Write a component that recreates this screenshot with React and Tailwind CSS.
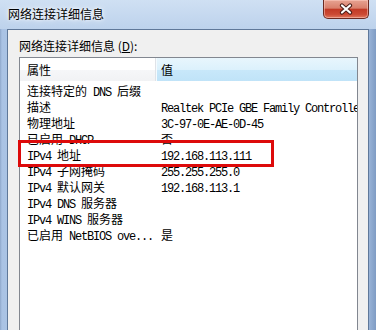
import React from 'react'

const rows = [
  ['连接特定的 DNS 后缀', ''],
  ['描述', 'Realtek PCIe GBE Family Controller'],
  ['物理地址', '3C-97-0E-AE-0D-45'],
  ['已启用 DHCP', '否'],
  ['IPv4 地址', '192.168.113.111'],
  ['IPv4 子网掩码', '255.255.255.0'],
  ['IPv4 默认网关', '192.168.113.1'],
  ['IPv4 DNS 服务器', ''],
  ['IPv4 WINS 服务器', ''],
  ['已启用 NetBIOS ove...', '是'],
]

// ASCII in the list uses a 6px-wide mono face, CJK stays at 12px
function MixedText({ text }) {
  const parts = text.split(/([\x20-\x7e]+)/).filter(Boolean)
  return parts.map((p, i) =>
    /^[\x20-\x7e]+$/.test(p) ? (
      <span key={i} className="font-['Liberation_Mono',monospace] text-[12px] tracking-[-1.2px] whitespace-pre">
        {p}
      </span>
    ) : (
      <span key={i}>{p}</span>
    )
  )
}

function CloseButton() {
  return (
    <div className="ml-auto mr-[7px] w-[46px] h-[19px] rounded-b-[5px] border border-t-0 border-[#6b2a22] bg-[linear-gradient(to_bottom,#e7a392_0%,#d97f6c_45%,#c23a26_52%,#cc4a34_80%,#e0785e_100%)] flex items-center justify-center shadow-[inset_0_0_0_1px_rgba(255,210,200,0.5)]">
      <svg width="14" height="12" viewBox="0 0 14 12">
        <path d="M3 2.5 L11 9.5 M11 2.5 L3 9.5" stroke="#4a1d18" strokeWidth="4.2" strokeLinecap="round" />
        <path d="M3 2.5 L11 9.5 M11 2.5 L3 9.5" stroke="#ffffff" strokeWidth="2.2" strokeLinecap="round" />
      </svg>
    </div>
  )
}

export default function App() {
  return (
    <div className="w-[376px] h-[330px] overflow-hidden flex flex-col bg-[linear-gradient(to_right,#8fa8cb_0px,#aac3e4_2px,#bcd1ec_40%,#b9cfea_70%,#a8c1e3_97%,#7f9cc4_100%)] font-['Noto_Sans_CJK_SC',sans-serif] text-[12px] text-black">
      {/* Title bar */}
      <div className="h-[29px] shrink-0 flex items-start bg-[linear-gradient(to_bottom,#cfe0f3,#bdd2ec)]">
        <span className="ml-[8px] mt-[6px] leading-[16px] [text-shadow:0_0_6px_#ffffff,0_0_3px_#ffffff]">
          网络连接详细信息
        </span>
        <CloseButton />
      </div>

      {/* Client area */}
      <div className="flex-1 min-h-0 mx-[7px] border-l border-t border-r border-[#5f7899] bg-[#f0f0f0] pl-[11px] pt-[8px] flex flex-col">
        <div className="leading-[16px]">
          网络连接详细信息 (<u>D</u>):
        </div>

        <div className="relative mt-[3px] w-[339px] flex-1 border border-b-0 border-[#828790] bg-white">
          <div className="h-full overflow-hidden">
            {/* Header */}
            <div className="flex h-[23px]">
              <div className="w-[136px] shrink-0 pl-[7px] flex items-center border-r border-[#dfe3e8] bg-[linear-gradient(to_bottom,#ffffff_0%,#ffffff_50%,#f6f7f9_51%,#f1f2f4_100%)]">
                属性
              </div>
              <div className="flex-1 pl-[4px] flex items-center border-l border-[#f4fbff] bg-[linear-gradient(to_bottom,#e8f6fd_0%,#dcf1fc_50%,#c8e8fa_51%,#c0e3f8_100%)]">
                值
              </div>
            </div>

            {/* Rows */}
            <div className="pt-[2px]">
              {rows.map(([name, value]) => (
                <div key={name} className="flex h-[16px] leading-[16px] whitespace-nowrap">
                  <div className="w-[136px] shrink-0 pl-[7px] overflow-hidden">
                    <MixedText text={name} />
                  </div>
                  <div className="pl-[5px]">
                    <MixedText text={value} />
                  </div>
                </div>
              ))}
            </div>
          </div>

          {/* Highlight box drawn over the list */}
          <div className="absolute left-[-2px] top-[82px] w-[256px] h-[27px] border-[3px] border-[#dd0a0a]" />
        </div>
      </div>
    </div>
  )
}
